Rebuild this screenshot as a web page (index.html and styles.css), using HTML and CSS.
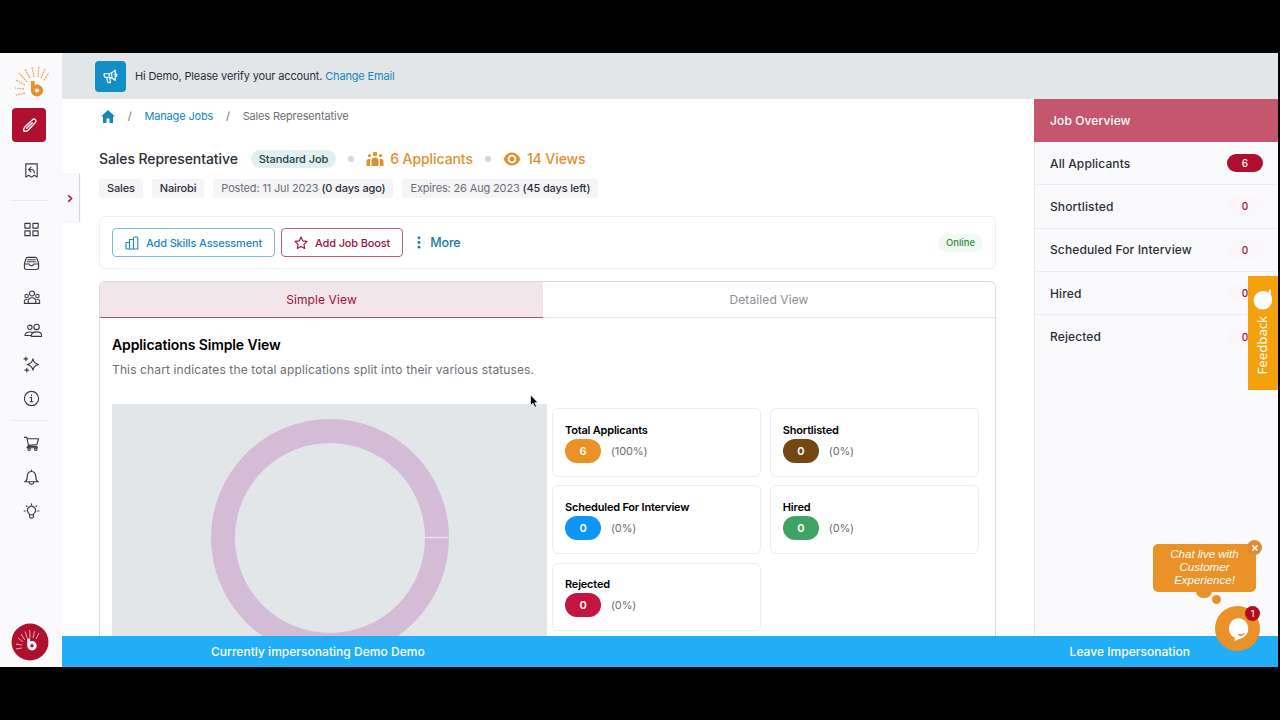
FILE: index.html
```html
<!DOCTYPE html>
<html lang="en">
<head>
    <meta charset="UTF-8">
    <meta name="viewport" content="width=device-width, initial-scale=1.0">
    <title>Sales Representative - Manage Jobs</title>
    <link rel="stylesheet" href="styles.css">
</head>
<body>
    <div class="app">
        <nav class="sidebar">
            <svg class="logo" viewBox="0 0 36 36">
                <g fill="none" stroke="#e8a65a" stroke-width="1.3" stroke-dasharray="1.800 .9">
                    <path d="M12 30L3 32M11 26L2 25M12 22L3 17M14 19L6 10M17 15L12 6M21 14L19 4M25 14L26 3M28 15L32 6M31 17L36 10"/>
                </g>
                <path d="M19.800 18v9" stroke="#e8912a" stroke-width="3.800"/>
                <circle cx="24" cy="27.500" r="4.100" fill="none" stroke="#e8912a" stroke-width="4"/>
            </svg>
            <a class="compose">
                <svg class="icon" viewBox="0 0 18 18"><path d="M3 15q-.5-3 1-4.500l8.200-7.700a2 2 0 0 1 3 3L7.500 14Q6 15.500 3 15zM6 12l6-6"/></svg>
            </a>
            <a class="nav-item receipt"><svg class="icon" viewBox="0 0 18 18"><path d="M3 2h12v14l-3-2-3 2-3-2-3 2zM6 8l2.500-2.500M6 8l2.500 2.500M6 8h3q3 0 3 3.500"/></svg></a>
            <hr>
            <a class="nav-item"><svg class="icon" viewBox="0 0 18 18"><path d="M2 2.500h5.500v5H2zM10.500 2.500H16v5h-5.500zM2 10.500h5.500v5H2zM10.500 10.500H16v5h-5.500z"/></svg></a>
            <a class="nav-item"><svg class="icon" viewBox="0 0 18 18"><path d="M1.500 9l1.500-4.500q.4-2 2-2h8q1.600 0 2 2L16.500 9v4q0 2.300-2.300 2.300H3.800q-2.300 0-2.300-2.300zM1.500 9.500h5q.5 2 2.500 2t2.500-2h5M5 5h8M4.500 7.200h9"/></svg></a>
            <a class="nav-item"><svg class="icon wide" viewBox="0 0 20 18"><circle cx="10" cy="4.500" r="2.800"/><circle cx="4" cy="7.300" r="1.900"/><circle cx="16" cy="7.300" r="1.900"/><path d="M5.800 15.500v-3.300Q6.500 9.300 10 9.300t4.200 2.900v3.300zM5.800 15.500H1.500v-2.500q.3-2 3-2M14.200 15.500h4.300v-2.500q-.3-2-3-2"/></svg></a>
            <a class="nav-item"><svg class="icon wide shift" viewBox="0 0 20 18"><circle cx="6.500" cy="5.500" r="2.500"/><circle cx="14" cy="5" r="3"/><path d="M8 15.500q0-5 6-5t6 5zM9 11q-7.500-1.500-8 3.500h6.500"/></svg></a>
            <a class="nav-item"><svg class="icon" viewBox="0 0 18 18"><path d="M10.500 3q1 5 6 6-5 1-6 6-1-5-6-6 5-1 6-6zM3 1v4M1 3h4M4 13v4M2 15h4"/></svg></a>
            <a class="nav-item"><svg class="icon" viewBox="0 0 18 18"><circle cx="9" cy="9" r="7.500"/><path d="M7.500 8H9v4.500M7.500 12.500h3M9 5v1"/></svg></a>
            <hr>
            <a class="nav-item"><svg class="icon" viewBox="0 0 18 18"><path d="M1.500 2.500H4l2 9.500h9M4.300 4h12.200l-1.700 6-9 .8M6 12q-2 .2-1.600 1.500h11"/><circle cx="6.500" cy="15" r="1.300"/><circle cx="13.500" cy="15" r="1.300"/></svg></a>
            <a class="nav-item"><svg class="icon" viewBox="0 0 18 18"><path d="M9 1v1.500M2.500 13.500q2-1.500 2-6 .5-4.800 4.500-4.800t4.500 4.800q0 4.500 2 6zM1.500 13.500h15M6.500 13.800q.5 2.500 2.500 2.500t2.500-2.500"/></svg></a>
            <a class="nav-item"><svg class="icon" viewBox="0 0 18 18"><path d="M7 12.500q0-1-1.200-2a4.200 4.200 0 1 1 6.400 0q-1.200 1-1.200 2zM7 12.500v2q0 1.500 2 1.500t2-1.500v-2M9 .8v1M3.500 3l.8.8M14.500 3l-.8.800M1.200 8.500h1.200M15.600 8.500h1.200"/></svg></a>
            <svg class="avatar" viewBox="0 0 38 38">
                <circle cx="19" cy="19" r="18.500" fill="#b01030"/>
                <path d="M11 25l-6 1M11 22l-6-1M12 19l-5-4M14 17l-4-6M16.500 15.500L14 8.500M19 15l-.3-8M22 15l1.500-7M25 16l3-6" stroke="#f0b8bd" stroke-width=".9"/>
                <path d="M17.700 15.500v7" stroke="#fff" stroke-width="2.800"/>
                <circle cx="21" cy="22.800" r="3.200" fill="none" stroke="#fff" stroke-width="3"/>
            </svg>
            <div class="drawer-toggle">
                <svg viewBox="0 0 8 10"><path d="M2 1.500L5.800 5 2 8.500"/></svg>
            </div>
        </nav>

        <div class="main">
            <div class="banner">
                <span class="banner-icon">
                    <svg viewBox="0 0 20 20"><path d="M2.500 6.500Q5 7 9 6.500q4-1 6.500-4v12q-2.500-3-6.500-3.500H4Q2 10 2.500 6.500zM8.500 6.700V11M11.500 5.500v6M15.500 6.500q2 .5 2 2t-2 2M5.500 11.200l1.500 6h3l-1-6"/></svg>
                </span>
                <span>Hi Demo, Please verify your account. <a class="link">Change Email</a></span>
            </div>

            <div class="body">
                <div class="page">
                    <div class="breadcrumb">
                        <svg class="home" viewBox="0 0 14 13"><path d="M7 0l7 6.500h-2V13H8.500V8.500h-3V13H2V6.500H0z"/></svg>
                        <span class="slash">/</span>
                        <a class="link">Manage Jobs</a>
                        <span class="slash">/</span>
                        <span>Sales Representative</span>
                    </div>

                    <div class="title-row">
                        <h1>Sales Representative</h1>
                        <span class="job-type">Standard Job</span>
                        <i class="dot"></i>
                        <span class="metric">
                            <svg class="people" viewBox="0 0 18 16"><circle cx="9" cy="3" r="2.300"/><circle cx="3.500" cy="4.500" r="1.600"/><circle cx="14.500" cy="4.500" r="1.600"/><path d="M5.500 15V10q0-3.500 3.500-3.500t3.500 3.500v5zM.5 15v-4.500q0-3 4.200-2.700-.7 1.200-.7 3V15zM17.500 15v-4.500q0-3-4.200-2.700.7 1.200.7 3V15z"/></svg>
                            6 Applicants
                        </span>
                        <i class="dot"></i>
                        <span class="metric">
                            <svg class="eye" viewBox="0 0 18 14"><path fill-rule="evenodd" d="M9 .5q5.500 0 8.500 6.500-3 6.500-8.500 6.500T.5 7Q3.500.5 9 .5zM9 2.700a4.300 4.300 0 1 0 0 8.600 4.300 4.300 0 0 0 0-8.600z"/><circle cx="9" cy="7" r="2.500"/></svg>
                            14 Views
                        </span>
                    </div>

                    <div class="chips">
                        <span class="chip"><b>Sales</b></span>
                        <span class="chip"><b>Nairobi</b></span>
                        <span class="chip">Posted: 11 Jul 2023 <b>(0 days ago)</b></span>
                        <span class="chip">Expires: 26 Aug 2023 <b>(45 days left)</b></span>
                    </div>

                    <div class="toolbar">
                        <button class="btn btn-blue">
                            <svg viewBox="0 0 14 14"><path d="M1 6.500h3.500V13H1zM4.500 3.500H8.500V13h-4zM8.500 2q0-1 1-1h2.300q1 0 1 1v11H8.500z"/></svg>
                            Add Skills Assessment
                        </button>
                        <button class="btn btn-red">
                            <svg viewBox="0 0 14 14"><path d="M7 1l1.800 3.900 4.200.5-3.100 2.900.8 4.200L7 10.400l-3.700 2.100.8-4.200L1 5.400l4.200-.5z"/></svg>
                            Add Job Boost
                        </button>
                        <a class="more">
                            <svg viewBox="0 0 4 14"><circle cx="2" cy="2" r="1.500"/><circle cx="2" cy="7" r="1.500"/><circle cx="2" cy="12" r="1.500"/></svg>
                            More
                        </a>
                        <span class="online">Online</span>
                    </div>

                    <div class="panel">
                        <div class="tabs">
                            <div class="tab active">Simple View</div>
                            <div class="tab">Detailed View</div>
                        </div>
                        <h2>Applications Simple View</h2>
                        <p>This chart indicates the total applications split into their various statuses.</p>
                        <div class="overview">
                            <div class="chart">
                                <svg viewBox="0 0 238 238">
                                    <circle cx="119" cy="119" r="107" fill="none" stroke="#d5bcd6" stroke-width="24"/>
                                    <path d="M214 118.500h24" stroke="#eadfeb" stroke-width="1.500"/>
                                </svg>
                            </div>
                            <div class="stats">
                                <div class="stat"><h3>Total Applicants</h3><div><span class="pill orange">6</span>(100%)</div></div>
                                <div class="stat"><h3>Shortlisted</h3><div><span class="pill brown">0</span>(0%)</div></div>
                                <div class="stat"><h3>Scheduled For Interview</h3><div><span class="pill blue">0</span>(0%)</div></div>
                                <div class="stat"><h3>Hired</h3><div><span class="pill green">0</span>(0%)</div></div>
                                <div class="stat"><h3>Rejected</h3><div><span class="pill red">0</span>(0%)</div></div>
                            </div>
                        </div>
                    </div>
                </div>

                <aside class="job-overview">
                    <div class="overview-head">Job Overview</div>
                    <div class="overview-row">All Applicants <span class="count filled">6</span></div>
                    <div class="overview-row">Shortlisted <span class="count">0</span></div>
                    <div class="overview-row">Scheduled For Interview <span class="count">0</span></div>
                    <div class="overview-row">Hired <span class="count">0</span></div>
                    <div class="overview-row">Rejected <span class="count">0</span></div>
                </aside>
            </div>

            <div class="impersonation">
                <span>Currently impersonating Demo Demo</span>
                <a>Leave Impersonation</a>
            </div>
        </div>

        <div class="feedback">
            <svg viewBox="0 0 20 22"><path d="M16 4.500V1.500l1.800.5v5q1.500 2 1.300 5A9.300 9.300 0 1 1 10 3q4 0 6 1.500z"/></svg>
            <span>Feedback</span>
        </div>

        <div class="chat-bubble">
            Chat live with<br>Customer<br>Experience!
            <span class="chat-close"><svg viewBox="0 0 8 8"><path d="M1.500 1.500l5 5M6.500 1.500l-5 5"/></svg></span>
            <i class="tail"></i>
            <i class="tail-dot"></i>
        </div>
        <div class="chat-button">
            <svg viewBox="0 0 24 24"><path d="M12 1a10.500 10.500 0 0 1 3 20.500L8.500 24l.3-3.200A10.500 10.500 0 0 1 12 1z" fill="#fff"/><path d="M11 16.500q4 1.500 8-.5-1.500 3-4 3t-4-2.500z" fill="#e8912a"/></svg>
            <span class="chat-count">1</span>
        </div>

        <svg class="cursor" viewBox="0 0 12 17"><path d="M1.500 1v12l2.800-2.500 2 4.500 2-.9-2-4.300H10z" fill="#000" stroke="#fff" stroke-width=".8"/></svg>
    </div>
</body>
</html>
```
FILE: styles.css
```css
* {
    box-sizing: border-box;
}
body {
    margin: 0;
    padding: 53px 0;
    height: 720px;
    background: #000;
    font-family: Inter, "Liberation Sans", sans-serif;
    font-size: 11px;
    letter-spacing: -.15px;
    color: #2b2f38;
    overflow: hidden;
}
h1, h2, h3, p {
    margin: 0;
}
a.link {
    color: #1787b8;
}
.app {
    position: relative;
    display: flex;
    width: 1278px;
    height: 614px;
    background: #fff;
}

/* Sidebar */
.sidebar {
    position: relative;
    display: flex;
    flex-direction: column;
    align-items: center;
    width: 61.5px;
    flex: none;
    padding: 10px 0 6px;
    background: #fafafd;
}
.logo {
    width: 36px;
    height: 36px;
    margin-bottom: 9px;
    flex: none;
}
.icon {
    width: 17px;
    height: 17px;
    margin-left: 1px;
    fill: none;
    stroke: #343944;
    stroke-width: 1.2;
    stroke-linejoin: round;
    stroke-linecap: round;
}
.icon.wide {
    width: 18px;
    margin-left: 2px;
}
.icon.shift {
    margin-left: 4px;
}
.compose {
    display: flex;
    align-items: center;
    justify-content: center;
    width: 34px;
    height: 34px;
    margin-right: 3.5px;
    border-radius: 4px;
    background: #b01030;
}
.compose .icon {
    margin-left: 0;
    stroke: #fff;
    stroke-width: 1.4;
}
.nav-item {
    display: flex;
    align-items: center;
    justify-content: center;
    height: 33.7px;
}
.nav-item.receipt {
    height: 57px;
}
.sidebar hr {
    width: 36px;
    height: 1px;
    margin: 5px 2px 6px 0;
    border: 0;
    background: #e9eaed;
}
.sidebar .receipt + hr {
    margin-top: 1px;
    margin-bottom: 12px;
}
.avatar {
    width: 38px;
    height: 38px;
    margin-top: auto;
    margin-right: 1px;
    flex: none;
}
.drawer-toggle {
    position: absolute;
    top: 121px;
    left: 60px;
    z-index: 1;
    display: flex;
    align-items: center;
    justify-content: center;
    width: 19px;
    height: 48px;
    background: #fafafd;
    box-shadow: 1px 0 1px #d5d6da;
}
.drawer-toggle svg {
    width: 8px;
    height: 9px;
    fill: none;
    stroke: #b01040;
    stroke-width: 1.6;
}

/* Top banner */
.main {
    display: flex;
    flex-direction: column;
    flex: 1;
    min-width: 0;
}
.banner {
    display: flex;
    align-items: center;
    gap: 9px;
    height: 46px;
    flex: none;
    padding-left: 33.5px;
    background: #e2e6e9;
}
.banner-icon {
    display: flex;
    align-items: center;
    justify-content: center;
    width: 31px;
    height: 31px;
    border-radius: 4px;
    background: #128fc7;
}
.banner-icon svg {
    width: 17px;
    height: 17px;
    fill: none;
    stroke: #fff;
    stroke-width: 1.4;
    stroke-linejoin: round;
}
.body {
    display: flex;
    flex: 1;
    min-height: 0;
    overflow: hidden;
}

/* Job page */
.page {
    width: 972.5px;
    padding: 7px 38px 0 37.5px;
}
.breadcrumb {
    display: flex;
    align-items: center;
    height: 20px;
    padding-left: 2px;
    color: #6b6f76;
}
.home {
    width: 14px;
    height: 13px;
    fill: #1787b8;
}
.slash {
    margin: 0 12.8px;
}
.title-row {
    display: flex;
    align-items: center;
    height: 25px;
    margin-top: 20px;
    letter-spacing: -.08px;
}
h1 {
    font-size: 14px;
    font-weight: 500;
}
.job-type {
    height: 18px;
    margin-left: 13px;
    padding: 0 8px;
    border-radius: 9px;
    background: #e0f0ee;
    color: #1d4147;
    font-weight: 500;
    line-height: 18px;
}
.dot {
    width: 6px;
    height: 6px;
    margin: 0 12px;
    border-radius: 50%;
    background: #d6d7d9;
}
.metric {
    display: flex;
    align-items: center;
    gap: 6px;
    color: #e0902e;
    font-size: 14px;
    font-weight: 500;
}
.metric svg {
    width: 18px;
    fill: #e0902e;
}
.people {
    height: 16px;
}
.eye {
    height: 14px;
}
.chips {
    display: flex;
    gap: 9px;
    height: 19px;
    margin-top: 8px;
}
.chip {
    padding: 0 8px;
    border-radius: 3px;
    background: #f5f5f7;
    color: #6b6f76;
    line-height: 19px;
    white-space: nowrap;
}
.chip b {
    color: #2b2f38;
    font-weight: 500;
}
.toolbar {
    display: flex;
    align-items: center;
    height: 53px;
    margin-top: 18px;
    padding: 0 12px;
    border: 1px solid #eeeff1;
    border-radius: 6px;
}
.btn {
    display: flex;
    align-items: center;
    gap: 7px;
    height: 29px;
    margin-right: 6px;
    padding: 0 12px;
    border: 1px solid;
    border-radius: 4px;
    background: #fff;
    font: 500 11px Inter, "Liberation Sans", sans-serif;
    letter-spacing: -.15px;
}
.btn svg {
    width: 14px;
    height: 14px;
    fill: none;
    stroke: currentColor;
    stroke-width: 1.1;
    stroke-linejoin: round;
}
.btn-blue {
    border-color: #7dbcd8;
    color: #1b87c4;
}
.btn-red {
    border-color: #b65f7e;
    color: #a01040;
}
.more {
    display: flex;
    align-items: center;
    gap: 9px;
    margin-left: 8px;
    color: #1579ac;
    font-size: 12.5px;
    font-weight: 500;
}
.more svg {
    width: 4px;
    height: 13px;
    fill: currentColor;
}
.online {
    height: 18px;
    margin-left: auto;
    padding: 0 8px;
    border-radius: 9px;
    background: #f1f9f3;
    color: #2f8d45;
    font-size: 9.5px;
    font-weight: 500;
    letter-spacing: 0;
    line-height: 18px;
}

/* Simple / detailed view panel */
.panel {
    height: 500px;
    margin-top: 12px;
    border: 1px solid #d9dadd;
    border-radius: 6px 6px 0 0;
    letter-spacing: .1px;
    overflow: hidden;
}
.tabs {
    display: flex;
    height: 36px;
}
.tab {
    flex: 1;
    border-bottom: 1px solid #e8e9eb;
    color: #8d9096;
    font-size: 12px;
    line-height: 36px;
    text-align: center;
}
.tab.active {
    flex: 0 0 443px;
    border-color: #b5486b;
    background: #f2e6ea;
    color: #a01040;
}
h2 {
    margin: 17px 0 0 12px;
    color: #000;
    font-size: 14px;
    font-weight: 600;
    letter-spacing: -.12px;
    line-height: 20px;
}
.panel p {
    margin: 6px 0 0 12px;
    color: #6b7075;
    font-size: 12px;
    letter-spacing: .13px;
    line-height: 18px;
}
.overview {
    display: flex;
    gap: 5px;
    margin: 25px 16px 0 12px;
}
.chart {
    width: 435px;
    height: 340px;
    flex: none;
    padding: 14.5px 0 0 98.5px;
    background: #e3e6e9;
}
.chart svg {
    width: 238px;
    height: 238px;
}
.stats {
    display: grid;
    grid-template-columns: 209px 209px;
    grid-auto-rows: 68.5px;
    gap: 8.8px;
    padding-top: 4px;
}
.stat {
    padding: 12.5px 12px;
    border: 1px solid #ebecee;
    border-radius: 6px;
    color: #6b6f76;
    letter-spacing: -.15px;
}
.stat h3 {
    color: #000;
    font-size: 11px;
    font-weight: 600;
    letter-spacing: -.2px;
    line-height: 17px;
}
.stat div {
    display: flex;
    align-items: center;
    gap: 10px;
}
.pill {
    width: 36px;
    height: 24px;
    border-radius: 12px;
    color: #fff;
    font-weight: 600;
    line-height: 24px;
    text-align: center;
}
.orange { background: #ea9127; }
.brown { background: #734813; }
.blue { background: #0f95f5; }
.green { background: #3fa463; }
.red { background: #c51641; }

/* Job overview column */
.job-overview {
    flex: 1;
    border-left: 1px solid #e6e7ea;
    background: #fafafd;
    font-size: 12px;
    font-weight: 500;
    letter-spacing: .12px;
}
.overview-head {
    height: 43px;
    margin-left: -1px;
    padding-left: 16px;
    background: #c4566e;
    color: #fff;
    line-height: 43px;
}
.overview-row {
    display: flex;
    align-items: center;
    justify-content: space-between;
    height: 43.3px;
    padding: 0 15px;
    border-bottom: 1px solid #ebecef;
}
.overview-row:last-child {
    border-bottom: 0;
}
.count {
    width: 36px;
    height: 18px;
    border-radius: 9px;
    background: #fbf6f9;
    color: #a01040;
    font-size: 10px;
    line-height: 18px;
    text-align: center;
}
.count.filled {
    background: #b01030;
    color: #fff;
}

.impersonation {
    display: flex;
    align-items: center;
    justify-content: space-between;
    height: 31px;
    flex: none;
    padding: 0 88px 0 149.5px;
    background: #21aef6;
    color: #fff;
    font-size: 12px;
    font-weight: 500;
    letter-spacing: .03px;
}

/* Floating widgets */
.feedback {
    position: absolute;
    top: 223px;
    right: 0;
    display: flex;
    flex-direction: column;
    align-items: center;
    gap: 6px;
    width: 30px;
    height: 114px;
    padding-top: 12px;
    background: #f3a10d;
}
.feedback svg {
    width: 20px;
    height: 22px;
    fill: #fff;
}
.feedback span {
    margin-right: 3px;
    color: #fff;
    font: 13.5px "Open Sans", sans-serif;
    writing-mode: vertical-rl;
    transform: rotate(180deg);
}
.chat-bubble {
    position: absolute;
    top: 491px;
    left: 1153px;
    width: 103px;
    height: 48px;
    padding-top: 4px;
    border-radius: 5px;
    background: #ea9127;
    color: #fff;
    font: italic 11.5px/13px "Liberation Sans", sans-serif;
    letter-spacing: 0;
    text-align: center;
}
.chat-close {
    position: absolute;
    top: -4px;
    right: -6px;
    display: flex;
    align-items: center;
    justify-content: center;
    width: 15px;
    height: 15px;
    border-radius: 50%;
    background: #df8d34;
}
.chat-close svg {
    width: 8px;
    height: 8px;
    stroke: #fff;
    stroke-width: 1.6;
}
.tail {
    position: absolute;
    top: 47px;
    left: 43px;
    width: 16px;
    height: 7px;
    border-radius: 0 0 8px 8px;
    background: #ea9127;
}
.tail-dot {
    position: absolute;
    top: 51px;
    left: 59px;
    width: 9px;
    height: 9px;
    border-radius: 50%;
    background: #ea9127;
}
.chat-button {
    position: absolute;
    top: 553px;
    left: 1215px;
    display: flex;
    align-items: center;
    justify-content: center;
    width: 45px;
    height: 45px;
    border-radius: 50%;
    background: #ea9127;
}
.chat-button svg {
    width: 24px;
    height: 24px;
}
.chat-count {
    position: absolute;
    top: 0;
    right: 0;
    width: 15px;
    height: 15px;
    border-radius: 50%;
    background: #b00c1c;
    color: #fff;
    font-size: 9px;
    line-height: 15px;
    text-align: center;
}
.cursor {
    position: absolute;
    top: 341px;
    left: 529px;
    width: 11px;
    height: 15px;
}
```
